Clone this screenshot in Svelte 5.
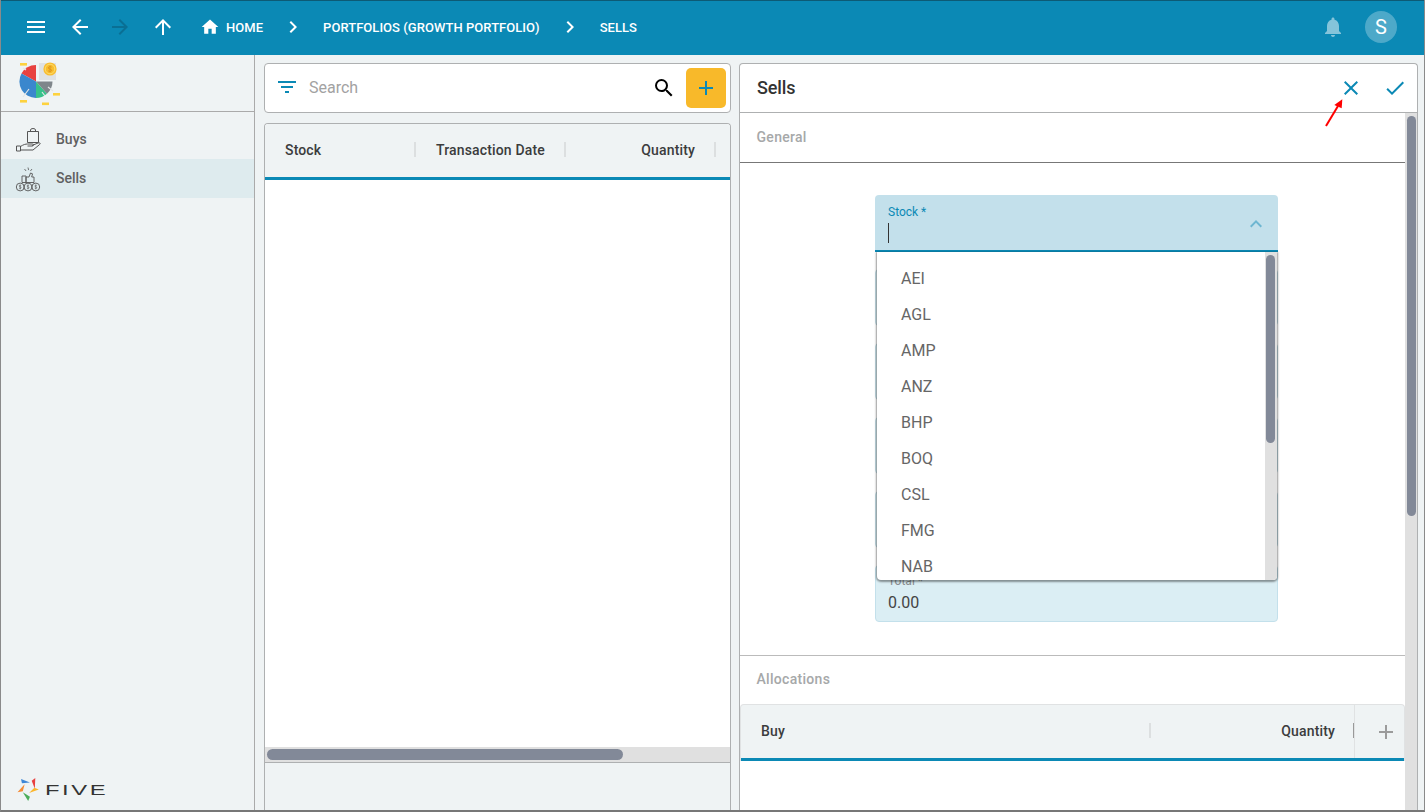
<script>
  const stocks = ['AEI', 'AGL', 'AMP', 'ANZ', 'BHP', 'BOQ', 'CSL', 'FMG', 'NAB'];
  const hiddenFields = [1, 2, 3, 4];
  const crumbs = ['PORTFOLIOS (GROWTH PORTFOLIO)', 'SELLS'];
  const coins = [5.2, 13, 20.8];
</script>

<div class="app">
  <header class="topbar">
    <button class="ic menu" aria-label="Menu"><svg viewBox="0 0 24 24"><path d="M3 18h18v-2H3v2zm0-5h18v-2H3v2zm0-7v2h18V6H3z"/></svg></button>
    <button class="ic back" aria-label="Back"><svg viewBox="0 0 24 24"><path d="M20 11H7.83l5.59-5.59L12 4l-8 8 8 8 1.41-1.41L7.83 13H20v-2z"/></svg></button>
    <button class="ic fwd" aria-label="Forward"><svg viewBox="0 0 24 24"><path d="M12 4l-1.41 1.41L16.17 11H4v2h12.17l-5.58 5.59L12 20l8-8z"/></svg></button>
    <button class="ic up" aria-label="Up"><svg viewBox="0 0 24 24"><path d="M4 12l1.41 1.41L11 7.83V20h2V7.83l5.58 5.59L20 12l-8-8-8 8z"/></svg></button>
    <span class="ic home"><svg viewBox="0 0 24 24"><path d="M10 20v-6h4v6h5v-8h3L12 3 2 12h3v8z"/></svg></span>
    <span class="crumb first">HOME</span>
    {#each crumbs as c}
      <span class="ic chev"><svg viewBox="0 0 24 24"><path d="M10 6L8.59 7.41 13.17 12l-4.58 4.59L10 18l6-6z"/></svg></span>
      <span class="crumb">{c}</span>
    {/each}
    <span class="spacer"></span>
    <span class="ic bell"><svg viewBox="0 0 24 24"><path d="M12 22c1.1 0 2-.9 2-2h-4c0 1.1.9 2 2 2zm6-6v-5c0-3.07-1.63-5.64-4.5-6.32V4c0-.83-.67-1.5-1.5-1.5s-1.5.67-1.5 1.5v.68C7.64 5.36 6 7.92 6 11v5l-2 2v1h16v-1l-2-2z"/></svg></span>
    <span class="avatar">S</span>
  </header>

  <div class="main">
    <aside class="side">
      <div class="brand">
        <svg width="46" height="46" viewBox="0 0 46 46">
          <rect x="2" y="1" width="7" height="2.6" fill="#fdd23e"/>
          <rect x="35" y="31" width="7" height="2.6" fill="#fdd23e"/>
          <rect x="2" y="38" width="7" height="2.6" fill="#fdd23e"/>
          <rect x="24" y="40.5" width="7" height="2.6" fill="#fdd23e"/>
          <rect x="21" y="1" width="17" height="17" fill="#dfe2e4"/>
          <path d="M18 19.5 L18 3 A16.5 16.5 0 0 0 3.5 11.5 Z" fill="#e8423f"/>
          <path d="M18 19.5 L3.5 11.5 A16.5 16.5 0 0 0 18 36 Z" fill="#3a87cd"/>
          <path d="M18 19.5 L18 36 A16.5 16.5 0 0 0 29 31.8 Z" fill="#37c28a"/>
          <path d="M18 19.5 L29 31.8 A16.5 16.5 0 0 0 34.5 19.5 Z" fill="#7f868b"/>
          <path d="M11 27 L5 35M30 25 L35 29M24 30 L27 34M8 8 L5 6" stroke="#e3e6e8" stroke-width="1.2"/>
          <circle cx="32" cy="7" r="6.6" fill="#f9bd2f"/>
          <circle cx="32" cy="7" r="4.8" fill="none" stroke="#fbdd6c" stroke-width="1"/>
          <path d="M32 3.6v6.8M33.7 5.2c-1-.8-3.4-.7-3.4.7 0 1.7 3.4 .8 3.4 2.3 0 1.3-2.4 1.5-3.6.6" stroke="#d9921a" stroke-width=".8" fill="none"/>
        </svg>
      </div>
      <nav class="nav">
        <div class="nav-row">
          <svg class="nav-ic" width="26" height="24" viewBox="0 0 26 24" fill="none" stroke="#555" stroke-width="1">
            <path d="M12.5 3.5h11v11h-11zM15.5 3.5V2a2.5 1.5 0 0 1 5 0v1.5"/>
            <path d="M1.5 18h4v5h-4zM5.5 18.5c3-2 5-2.5 7-2.5h5c1.5 0 1.5 2-.5 2h-4.5M17 17.5l6-2.5c2-.6 3 .5 1.5 1.6L18 22H5.5"/>
          </svg>
          <span>Buys</span>
        </div>
        <div class="nav-row active">
          <svg class="nav-ic" width="26" height="26" viewBox="0 0 26 26" fill="none" stroke="#555" stroke-width=".9">
            {#each coins as cx}
              <circle {cx} cy="21" r="3.9"/>
              <path d="M{cx + 1} 19.6c-.6-.6-2-.5-2 .4 0 1.2 2 .6 2 1.7 0 .9-1.4 1-2.1.4M{cx} 18.6v4.8" stroke-width=".6"/>
            {/each}
            <path d="M7 10h4v6.5H7zM11 11h3l1.5-4 2 .8-.8 3.2h2.3v5.5h-8z"/>
            <path d="M13 1.5l.6 2.6M9.5 3l1.6 2M17 3l-1.6 2" stroke-width=".8"/>
          </svg>
          <span>Sells</span>
        </div>
      </nav>
      <div class="five">
        <svg width="27" height="24" viewBox="0 0 27 27">
          <path d="M4 1 L14 5 L5 6 Z" fill="#3f87d6"/>
          <path d="M20 0 L19.5 12 L16 3 Z" fill="#e8403f"/>
          <path d="M24 13 L13 17 L19 11 Z" fill="#fbb62c"/>
          <path d="M12 26 L6 16 L14 21 Z" fill="#4bad5a"/>
          <path d="M0 16 L8 7 L6 15 Z" fill="#f58a33"/>
        </svg>
        <span class="five-word">FIVE</span>
      </div>
    </aside>

    <section class="content">
      <div class="left">
        <div class="card search">
          <svg class="filter" viewBox="0 0 24 24"><path d="M10 18h4v-2h-4v2zM3 6v2h18V6H3zm3 7h12v-2H6v2z"/></svg>
          <span class="search-ph">Search</span>
          <svg class="mag" viewBox="0 0 24 24"><path d="M15.5 14h-.79l-.28-.27A6.47 6.47 0 0 0 16 9.5 6.5 6.5 0 1 0 9.5 16c1.61 0 3.09-.59 4.23-1.57l.27.28v.79l5 4.99L20.49 19l-4.99-5zm-6 0C7.01 14 5 11.99 5 9.5S7.01 5 9.5 5 14 7.01 14 9.5 11.99 14 9.5 14z"/></svg>
          <button class="add" aria-label="Add"><svg viewBox="0 0 24 24"><path d="M19 13h-6v6h-2v-6H5v-2h6V5h2v6h6v2z"/></svg></button>
        </div>
        <div class="card list">
          <div class="thead">
            <div class="th"><span class="lbl">Stock</span><i class="sep"></i></div>
            <div class="th"><span class="lbl">Transaction Date</span><i class="sep"></i></div>
            <div class="th"><span class="lbl right">Quantity</span><i class="sep"></i></div>
          </div>
          <div class="tbody"></div>
          <div class="htrack"><div class="hthumb"></div></div>
          <div class="tfoot"></div>
        </div>
      </div>

      <div class="card detail">
        <div class="detail-head">
          <h2>Sells</h2>
          <svg class="act close" viewBox="0 0 24 24"><path d="M19 6.41L17.59 5 12 10.59 6.41 5 5 6.41 10.59 12 5 17.59 6.41 19 12 13.41 17.59 19 19 17.59 13.41 12z"/></svg>
          <svg class="act" viewBox="0 0 24 24"><path d="M9 16.17L4.83 12l-1.42 1.41L9 19 21 7l-1.41-1.41z"/></svg>
          <svg class="pointer" width="20" height="30" viewBox="0 0 20 30"><path d="M2 28 L14 8" stroke="#f00" stroke-width="2"/><path d="M18.3 1.3 L10.3 7 L17.7 10.3 Z" fill="#f00"/></svg>
        </div>
        <div class="detail-body">
          <div class="scroll">
            <div class="section-title general">General</div>
            <div class="form">
              <div class="field focus">
                <span class="flabel">Stock *</span>
                <span class="caret"></span>
                <svg class="chev-up" viewBox="0 0 24 24"><path d="M12 8l-6 6 1.41 1.41L12 10.83l4.59 4.58L18 14z"/></svg>
              </div>
              {#each hiddenFields as f}
                <div class="field blank"></div>
              {/each}
              <div class="field total">
                <span class="flabel">Total *</span>
                <span class="fvalue">0.00</span>
              </div>
              <div class="dropdown">
                <ul>
                  {#each stocks as s}<li>{s}</li>{/each}
                </ul>
                <div class="vtrack small"><div class="vthumb small"></div></div>
              </div>
            </div>
            <div class="section-title alloc">Allocations</div>
            <div class="subtable">
              <div class="sub-th buy"><span class="lbl">Buy</span><i class="sep"></i></div>
              <div class="sub-th qty"><span class="lbl right">Quantity</span><i class="sep dark"></i></div>
              <div class="sub-add">
                <svg viewBox="0 0 24 24"><path d="M19 13h-6v6h-2v-6H5v-2h6V5h2v6h6v2z"/></svg>
              </div>
            </div>
          </div>
          <div class="vtrack"><div class="vthumb"></div></div>
        </div>
      </div>
    </section>
  </div>
</div>

<style>
  :global(body) { margin: 0; }
  * { box-sizing: border-box; }
  .app {
    width: 1425px; height: 812px; display: flex; flex-direction: column; overflow: hidden;
    font-family: Roboto, "Liberation Sans", sans-serif;
    background: #eff3f4;
    border-left: 1px solid #8a8a8a; border-right: 1px solid #8a8a8a; border-bottom: 2px solid #777;
  }
  button { border: 0; background: none; padding: 0; display: flex; }
  .topbar {
    height: 55px; flex: none; display: flex; align-items: center;
    background: #0b89b5; border-top: 1px solid #0d5a75; color: #fff; padding: 0 0 2px 23px;
  }
  .ic { width: 24px; height: 24px; flex: none; display: flex; }
  .ic svg { width: 100%; height: 100%; fill: #fff; }
  .back { margin-left: 20px; }
  .fwd { margin-left: 16px; }
  .fwd svg { fill: #0a6f94; }
  .up { margin-left: 19px; }
  .home { margin-left: 25px; width: 20px; height: 20px; }
  .crumb { font-size: 13px; font-weight: 500; white-space: nowrap; letter-spacing: .04px; }
  .crumb.first { margin-left: 6px; }
  .chev { margin: 0 18px; }
  .spacer { flex: 1; }
  .bell { opacity: .5; }
  .avatar {
    width: 32px; height: 32px; border-radius: 50%; background: rgba(255,255,255,.27);
    display: flex; align-items: center; justify-content: center;
    font-size: 20px; margin: 0 27px 0 20px;
  }

  .main { flex: 1; display: flex; min-height: 0; }
  .side {
    width: 254px; flex: none; border-right: 1px solid #aaa; display: flex; flex-direction: column;
  }
  .brand { height: 57px; flex: none; border-bottom: 1px solid #aaa; padding: 7px 0 0 17px; }
  .brand svg { display: block; }
  .nav { padding-top: 8px; flex: 1; }
  .nav-row {
    height: 39px; display: flex; align-items: center; padding-left: 14px;
    font-size: 14px; font-weight: 500; color: #5f6061;
  }
  .nav-row span { margin-bottom: 2px; }
  .nav-row.active { background: #deebee; }
  .nav-ic { flex: none; margin-right: 15px; }
  .five { display: flex; align-items: center; height: 37px; padding: 0 0 4px 15px; }
  .five-word {
    font-family: "Liberation Sans", sans-serif; font-size: 14px; color: #333;
    letter-spacing: 1.5px; margin-left: 2px; display: inline-block;
    transform: scaleX(1.7); transform-origin: left center;
  }

  .content { flex: 1; display: flex; gap: 8px; padding: 8px 6px 0 9px; min-width: 0; }
  .left { width: 467px; flex: none; display: flex; flex-direction: column; gap: 10px; }
  .card { border: 1px solid #aeb0b1; border-radius: 4px; background: #fff; }
  .search { height: 50px; flex: none; display: flex; align-items: center; padding: 0 4px 0 10px; }
  .filter { width: 24px; height: 24px; fill: #0b89b5; flex: none; margin-bottom: 2px; }
  .search-ph { margin: 0 0 2px 10px; font-size: 16px; color: #a2a2a2; flex: 1; }
  .mag { width: 24px; height: 24px; fill: #000; flex: none; margin-right: 10px; }
  .add {
    width: 40px; height: 40px; border-radius: 5px; background: #f8b92a;
    align-items: center; justify-content: center;
  }
  .add svg { width: 24px; height: 24px; fill: #0b89b5; }
  .list { flex: 1; display: flex; flex-direction: column; border-bottom: 0; border-radius: 4px 4px 0 0; min-height: 0; }
  .thead {
    height: 56px; flex: none; display: flex; background: #eff3f4;
    border-bottom: 3px solid #0b89b5; border-radius: 3px 3px 0 0;
  }
  .th {
    width: 150px; flex: none; display: flex; align-items: center; padding: 0 0 2px 20px;
  }
  .th:first-child { width: 151px; }
  .lbl { flex: 1; font-size: 14px; font-weight: 500; color: #3b3c3d; white-space: nowrap; letter-spacing: .15px; }
  .lbl.right { text-align: right; }
  .th .lbl { margin-right: 19px; }
  .sep { width: 2px; height: 15px; background: #dcdfe0; flex: none; }
  .sep.dark { width: 1px; background: #999; }
  .tbody { flex: 1; background: #fff; }
  .htrack {
    height: 16px; flex: none; background: #e0e0e0; border-bottom: 1px solid #aeb0b1;
    padding: 2px 0 0 2px;
  }
  .hthumb { width: 356px; height: 11px; border-radius: 6px; background: #828998; }
  .tfoot { height: 47px; flex: none; background: #eff3f4; }

  .detail { width: 679px; flex: none; display: flex; flex-direction: column; border-bottom: 0; border-radius: 4px 4px 0 0; min-height: 0; }
  .detail-head {
    height: 49px; flex: none; display: flex; align-items: center; border-bottom: 1px solid #aeb0b1;
    padding: 0 10px 0 17px; position: relative;
  }
  h2 { flex: 1; margin: 0 0 2px; font-size: 18px; font-weight: 500; color: #333; letter-spacing: -.1px; }
  .act { width: 24px; height: 24px; fill: #0b89b5; flex: none; }
  .close { margin-right: 20px; }
  .pointer { position: absolute; left: 584px; top: 34px; }
  .detail-body { flex: 1; display: flex; min-height: 0; }
  .scroll { flex: 1; min-width: 0; overflow: hidden; }
  .section-title { font-size: 14px; font-weight: 500; color: #a6a8a9; padding-left: 16.5px; letter-spacing: .3px; }
  .general { height: 50px; padding-top: 16px; border-bottom: 1px solid #777; }
  .form {
    position: relative; padding: 32px 0 33px 135px; border-bottom: 1px solid #bbb;
    display: flex; flex-direction: column; gap: 17px;
  }
  .field {
    width: 403px; height: 57px; flex: none; border-radius: 4px; position: relative;
    display: flex; flex-direction: column; padding: 10px 13px 0;
  }
  .flabel { font-size: 12px; line-height: 14px; color: #0b89b5; }
  .focus { background: #c3e0eb; border-bottom: 2px solid #0b89b5; border-radius: 4px 4px 0 0; }
  .caret { width: 1px; height: 20px; background: #333; margin-top: 4px; }
  .chev-up { position: absolute; right: 10px; top: 17px; width: 24px; height: 24px; fill: #6db6d1; }
  .blank { background: #dbeef4; border: 1px solid #c3dce5; }
  .total { background: #dbeef4; border: 1px solid #c3e0eb; padding: 8px 12px 0; }
  .total .flabel { color: #8a8f91; }
  .fvalue { font-size: 16px; line-height: 20px; color: #444; margin-top: 5px; }
  .dropdown {
    position: absolute; left: 137px; top: 89px; width: 400px; height: 328px;
    background: #fff; border-radius: 0 0 4px 4px; display: flex; overflow: hidden;
    box-shadow: 0 1px 2px 1px rgba(0,0,0,.4);
  }
  .dropdown ul { list-style: none; margin: 0; padding: 9px 0 0; flex: 1; overflow: hidden; }
  .dropdown li { height: 36px; line-height: 36px; padding-left: 24px; font-size: 16px; color: #666; }
  .alloc { height: 48px; padding-top: 15px; }
  .subtable {
    height: 57px; display: flex; background: #eff3f4; border: 1px solid #e0e2e3; border-bottom: 0;
    border-radius: 4px 4px 0 0; position: relative;
  }
  .subtable::after { content: ""; position: absolute; left: 0; right: 0; bottom: 0; height: 3px; background: #0b89b5; }
  .sub-th { display: flex; align-items: center; padding-bottom: 5px; }
  .buy { width: 410px; padding-left: 20px; }
  .qty { width: 203px; }
  .qty .lbl { margin-right: 18px; }
  .sub-add {
    flex: 1; border-left: 1px solid #e0e2e3; display: flex; align-items: center; justify-content: center;
    padding: 0 0 2px 12px;
  }
  .sub-add svg { width: 24px; height: 24px; fill: #9b9b9b; }
  .vtrack { width: 12px; flex: none; background: #e0e0e0; padding: 3px 1px 0 2px; }
  .vthumb { height: 400px; border-radius: 5px; background: #828998; }
  .vtrack.small { height: 100%; padding: 3px 2px 0 1px; }
  .vthumb.small { height: 188px; }
</style>
